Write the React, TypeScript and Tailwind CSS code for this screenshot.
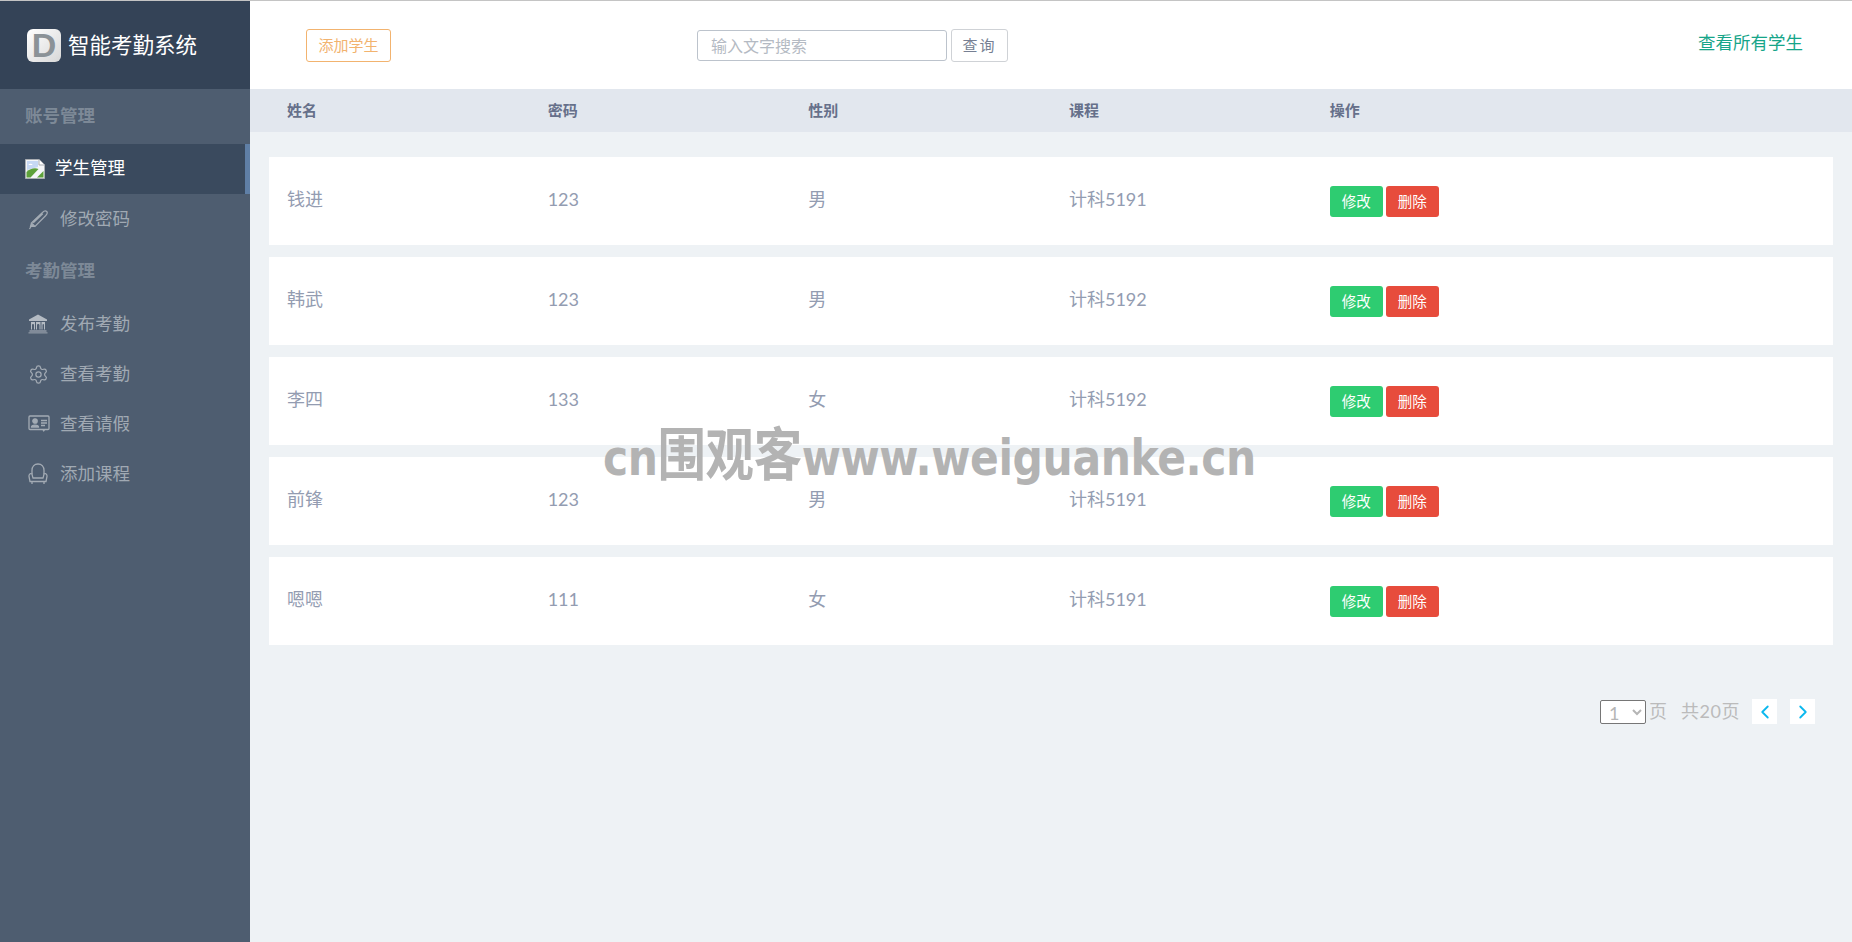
import { Settings, ChevronLeft, ChevronRight } from 'lucide-react';

const FONT = "font-['Lato','Noto_Sans_CJK_SC',sans-serif]";

const students = [
  { name: '钱进', pwd: '123', sex: '男', course: '计科5191' },
  { name: '韩武', pwd: '123', sex: '男', course: '计科5192' },
  { name: '李四', pwd: '133', sex: '女', course: '计科5192' },
  { name: '前锋', pwd: '123', sex: '男', course: '计科5191' },
  { name: '嗯嗯', pwd: '111', sex: '女', course: '计科5191' },
];

function BrokenImage() {
  return (
    <svg width="20" height="20" viewBox="0 0 20 20" className="shrink-0">
      <path d="M0.5 0.5H14L19.5 6V19.5H0.5Z" fill="#f4f6f8" stroke="#a9adb2" />
      <path d="M14 0.5V6H19.5" fill="#fff" stroke="#a9adb2" />
      <path d="M2 2H13V8L2 11Z" fill="#c6d8f4" />
      <path d="M3.500 6a2 1.300 0 0 1 4 0Z" fill="#fff" />
      <path d="M1.500 18.500V13C5 9.500 10 8.500 13.500 10L5.500 18.500Z" fill="#5da13a" />
      <path d="M12 18.500L18.500 12V18.500Z" fill="#5da13a" />
    </svg>
  );
}

function PenIcon() {
  return (
    <svg width="21" height="21" viewBox="0 0 21 21" fill="none" stroke="#a3abb4" strokeWidth="1.200" className="shrink-0">
      <path d="M3.500 14L14.500 3.500C15.800 2.200 17.500 1.500 18.700 2.500C19.800 3.700 19 5.300 17.800 6.500L7 17.500Z" />
      <path d="M3.500 14L2.500 17.500L7 17.500" fill="#a3abb4" />
      <path d="M1.500 20L3 17.500" />
      <path d="M5 13.500L14.500 4.500" strokeWidth="2" />
    </svg>
  );
}

function BankIcon() {
  return (
    <svg width="20" height="20" viewBox="0 0 20 20" fill="#b4bbc3" className="shrink-0">
      <path d="M10 0.500L19 5.500V7H1V5.500Z" />
      <path d="M3 8H7V15.500H6V11C6 9.500 4 9.500 4 11V15.500H3Z" />
      <path d="M8 8H12.500V15.500H11.500V11C11.500 9.500 9 9.500 9 11V15.500H8Z" />
      <path d="M13.500 8H17V15.500H16V11C16 9.500 14.500 9.500 14.500 11V15.500H13.500Z" />
      <path d="M1.500 16.500H18.500V17.500H1.500Z" />
      <path d="M0.500 18.500H19.500V19.300H0.500Z" />
    </svg>
  );
}

function CardIcon() {
  return (
    <svg width="22" height="18" viewBox="0 0 22 18" fill="none" stroke="#a3abb4" strokeWidth="1.300" className="shrink-0">
      <rect x="1" y="1" width="20" height="13.500" rx="1" />
      <circle cx="7" cy="6" r="2.200" fill="#a3abb4" />
      <path d="M3.500 12C3.500 9.500 10.500 9.500 10.500 12Z" fill="#a3abb4" />
      <path d="M13 5.500H19M13 8H19M13 10.500H17" />
      <path d="M14.500 15H17L15.700 17Z" fill="#a3abb4" stroke="none" />
    </svg>
  );
}

function ChairIcon() {
  return (
    <svg width="20" height="22" viewBox="0 0 20 22" fill="none" stroke="#a3abb4" strokeWidth="1.300" className="shrink-0">
      <path d="M4 11V7.500C4 3.500 6.500 1 10 1C13.500 1 16 3.500 16 7.500V11" />
      <path d="M4 11C2 10 0.800 11.500 1 13.500L2 18.500H18L19 13.500C19.200 11.500 18 10 16 11C15.500 13 15.500 14 15 15H5C4.500 14 4.500 13 4 11Z" />
      <path d="M4 18.500V21M16 18.500V21" />
    </svg>
  );
}

function NavItem({ icon, label }: { icon: React.ReactNode; label: string }) {
  return (
    <div className="h-[50px] flex items-center text-[17.5px] text-[#a0a9b3]">
      <span className="w-[60px] pl-[28px] flex items-center">{icon}</span>
      <span>{label}</span>
    </div>
  );
}

export default function App() {
  return (
    <div className={`relative flex flex-col h-[942px] overflow-hidden bg-[#eef2f5] ${FONT}`}>
      <div className="h-px shrink-0 bg-[#c4c4c4]" />
      <div className="flex flex-1 min-h-0">
        <aside className="w-[250px] shrink-0 bg-[#4e5d70]">
          <div className="h-[88px] flex items-center pl-[27px] gap-[7px] bg-[#344357]">
            <div className="w-[34px] h-[33px] rounded-[6px] bg-gradient-to-br from-white to-[#d8d8d8] flex items-center justify-center text-[34px] leading-none font-bold text-[#8b9297] font-['Liberation_Sans',sans-serif]">
              D
            </div>
            <span className="text-[21.5px] text-white">智能考勤系统</span>
          </div>
          <div className="h-[55px] flex items-center pl-[25px] text-[17.5px] font-bold text-[#7d8997]">账号管理</div>
          <div className="h-[50px] flex items-center pl-[25px] gap-[10px] bg-[#3a4a5e] border-r-[5px] border-[#5f7fa6] text-[17.5px] text-white">
            <BrokenImage />
            <span className="-mt-px">学生管理</span>
          </div>
          <NavItem icon={<PenIcon />} label="修改密码" />
          <div className="h-[55px] flex items-center pl-[25px] text-[17.5px] font-bold text-[#7d8997]">考勤管理</div>
          <NavItem icon={<BankIcon />} label="发布考勤" />
          <NavItem icon={<Settings size={21} strokeWidth={1.400} color="#a3abb4" />} label="查看考勤" />
          <NavItem icon={<CardIcon />} label="查看请假" />
          <NavItem icon={<ChairIcon />} label="添加课程" />
        </aside>

        <main className="flex-1 min-w-0 flex flex-col">
          <div className="h-[88px] shrink-0 bg-white flex items-start pt-[28px] pl-[56px] pr-[49px]">
            <button className="w-[85px] h-[33px] rounded-[3px] border border-[#f2b36f] text-[15px] text-[#f2b36f] bg-white">
              添加学生
            </button>
            <input
              placeholder="输入文字搜索"
              className="ml-[306px] mt-px w-[250px] h-[31px] px-[13px] rounded-[3px] border border-[#bcc3cc] text-[16px] placeholder:text-[#b4bac3] outline-none"
            />
            <button className="ml-1 w-[57px] h-[33px] rounded-[3px] border border-[#cfd2d6] text-[15px] tracking-[2px] text-[#767f93] bg-white">
              查询
            </button>
            <a className="ml-auto mt-[2px] -translate-y-px text-[17.5px] text-[#16a589]">查看所有学生</a>
          </div>

          <div className="h-[43px] shrink-0 bg-[#e2e7ee] px-[19px] grid grid-cols-6 items-center text-[15px] font-bold text-[#66708a]">
            <div className="pl-[18px]">姓名</div>
            <div className="pl-[18px]">密码</div>
            <div className="pl-[18px]">性别</div>
            <div className="pl-[18px]">课程</div>
            <div className="col-span-2 pl-[18px]">操作</div>
          </div>

          <div className="px-[19px] pt-[25px] flex flex-col gap-[12px]">
            {students.map((s) => (
              <div key={s.name} className="h-[88px] pb-[4px] bg-white grid grid-cols-6 items-center text-[18px] text-[#939cb1]">
                <div className="pl-[18px]">{s.name}</div>
                <div className="pl-[18px]">{s.pwd}</div>
                <div className="pl-[18px]">{s.sex}</div>
                <div className="pl-[18px]">{s.course}</div>
                <div className="col-span-2 pl-[18px] flex gap-[3px] mt-[5px]">
                  <button className="w-[53px] h-[31px] rounded-[3px] bg-[#2ecc71] text-[14.5px] text-white">修改</button>
                  <button className="w-[53px] h-[31px] rounded-[3px] bg-[#e74c3c] text-[14.5px] text-white">删除</button>
                </div>
              </div>
            ))}
          </div>

          <div className="flex items-center justify-end pt-[53px] pr-[37px] text-[18px] text-[#bbbbbb]">
            <select className="w-[46px] h-[24px] py-0 rounded-[2px] border border-[#767676] bg-white text-[18px] leading-none pl-[4px] text-[#b5b5b5]">
              <option>1</option>
            </select>
            <span className="ml-[3px]">页</span>
            <span className="ml-[14px] tracking-[0.5px]">共20页</span>
            <span className="ml-[12px] w-[25px] h-[25px] bg-white flex items-center justify-center">
              <ChevronLeft size={22} strokeWidth={2} color="#0bb8ee" />
            </span>
            <span className="ml-[13px] w-[25px] h-[25px] bg-white flex items-center justify-center">
              <ChevronRight size={22} strokeWidth={2} color="#0bb8ee" />
            </span>
          </div>
        </main>
      </div>

      <div className="absolute left-[603px] top-[425px] origin-left scale-x-[0.85] text-[50px] leading-[60px] font-bold tracking-[-0.5px] whitespace-nowrap text-[#b3b3b3] font-['DejaVu_Sans','Noto_Sans_CJK_SC',sans-serif]">
        cn<span className="text-[57px]">围观客</span>www.weiguanke.cn
      </div>
    </div>
  );
}
